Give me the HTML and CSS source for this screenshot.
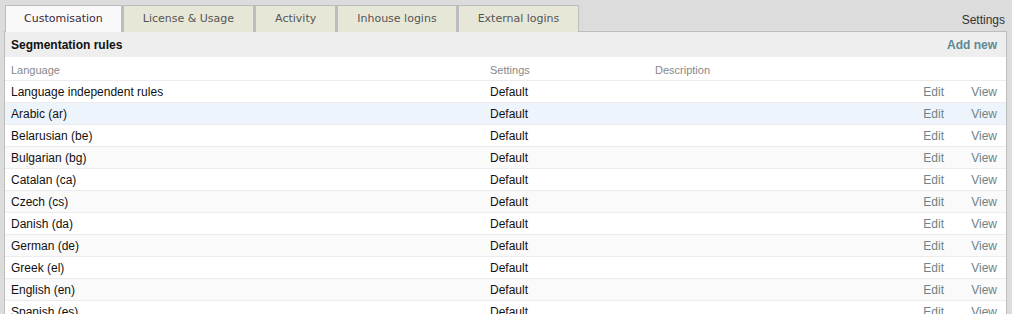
FILE: index.html
```html
<!DOCTYPE html>
<html lang="en">
<head>
  <meta charset="UTF-8" />
  <title>Customisation - Segmentation rules</title>
  <link rel="stylesheet" href="styles.css">
</head>
<body>
  <div class="page">
    <div class="top">
      <ul class="tabs">
        <li class="tab active">Customisation</li>
        <li class="tab">License &amp; Usage</li>
        <li class="tab">Activity</li>
        <li class="tab">Inhouse logins</li>
        <li class="tab">External logins</li>
      </ul>
      <div class="top-link">Settings</div>
    </div>

    <div class="panel">
      <div class="panel-head">
        <h2>Segmentation rules</h2>
        <a class="add-new" href="#">Add new</a>
      </div>
      <table class="rules">
        <thead>
          <tr>
            <th class="col-lang">Language</th>
            <th class="col-set">Settings</th>
            <th>Description</th>
            <th class="col-edit"></th>
            <th class="col-view"></th>
          </tr>
        </thead>
        <tbody>
          <tr><td>Language independent rules</td><td>Default</td><td></td><td class="act">Edit</td><td class="act view">View</td></tr>
          <tr class="selected"><td>Arabic (ar)</td><td>Default</td><td></td><td class="act">Edit</td><td class="act view">View</td></tr>
          <tr><td>Belarusian (be)</td><td>Default</td><td></td><td class="act">Edit</td><td class="act view">View</td></tr>
          <tr><td>Bulgarian (bg)</td><td>Default</td><td></td><td class="act">Edit</td><td class="act view">View</td></tr>
          <tr><td>Catalan (ca)</td><td>Default</td><td></td><td class="act">Edit</td><td class="act view">View</td></tr>
          <tr><td>Czech (cs)</td><td>Default</td><td></td><td class="act">Edit</td><td class="act view">View</td></tr>
          <tr><td>Danish (da)</td><td>Default</td><td></td><td class="act">Edit</td><td class="act view">View</td></tr>
          <tr><td>German (de)</td><td>Default</td><td></td><td class="act">Edit</td><td class="act view">View</td></tr>
          <tr><td>Greek (el)</td><td>Default</td><td></td><td class="act">Edit</td><td class="act view">View</td></tr>
          <tr><td>English (en)</td><td>Default</td><td></td><td class="act">Edit</td><td class="act view">View</td></tr>
          <tr><td>Spanish (es)</td><td>Default</td><td></td><td class="act">Edit</td><td class="act view">View</td></tr>
        </tbody>
      </table>
    </div>
  </div>
</body>
</html>
```

FILE: styles.css
```css
* {
  box-sizing: border-box;
  margin: 0;
  padding: 0;
}

body {
  background: #dcdcdc;
  color: #111;
  font-family: "Liberation Sans", Arial, sans-serif;
  font-size: 12px;
  overflow: hidden;
}

.page {
  padding: 5px 5px 0 4px;
}

.top {
  display: flex;
  justify-content: space-between;
  align-items: flex-end;
}

.tabs {
  display: flex;
  list-style: none;
  margin-bottom: -1px;
  padding-left: 1px;
}

.tab {
  height: 27px;
  line-height: 26px;
  padding: 0 19px;
  background: #e7e7d8;
  border: 1px solid #bdbdbd;
  border-bottom: none;
  color: #555;
  font-family: "DejaVu Sans", Verdana, sans-serif;
  font-size: 11px;
}

.tab + .tab {
  border-left-width: 2px;
}

.tab.active {
  padding: 0 18px;
  background: #f9f9f9;
  color: #3a2a3a;
  position: relative;
  z-index: 1;
}

.top-link {
  color: #333;
  padding: 0 2px 4px 0;
}

/* panel with header bar and table */
.panel {
  background: #fff;
  border: 1px solid #bdbdbd;
  border-bottom: none;
}

.panel-head {
  display: flex;
  justify-content: space-between;
  align-items: center;
  height: 25px;
  padding: 0 9px 0 6px;
  background: #eeeeee;
}

.panel-head h2 {
  font-size: 12px;
  font-weight: bold;
  color: #111;
}

.add-new {
  color: #5c8995;
  font-weight: bold;
  text-decoration: none;
}

.rules {
  width: 100%;
  border-collapse: collapse;
}

.rules th {
  height: 23px;
  padding: 3px 6px 0;
  text-align: left;
  font-weight: normal;
  font-size: 11px;
  color: #888;
}

.rules td {
  height: 22px;
  padding: 1px 6px 0;
  border-top: 1px solid #ececec;
  color: #111;
}

.col-lang { width: 479px; }
.col-set { width: 165px; }
.col-edit { width: 60px; }
.col-view { width: 62px; }

.rules tbody tr:nth-child(even) {
  background: #fafafa;
}

.rules tbody tr.selected {
  background: #eef4fc;
}

.rules td.act {
  text-align: right;
  color: #6e8387;
  padding-right: 0;
}

.rules td.view {
  padding-right: 9px;
}
```
